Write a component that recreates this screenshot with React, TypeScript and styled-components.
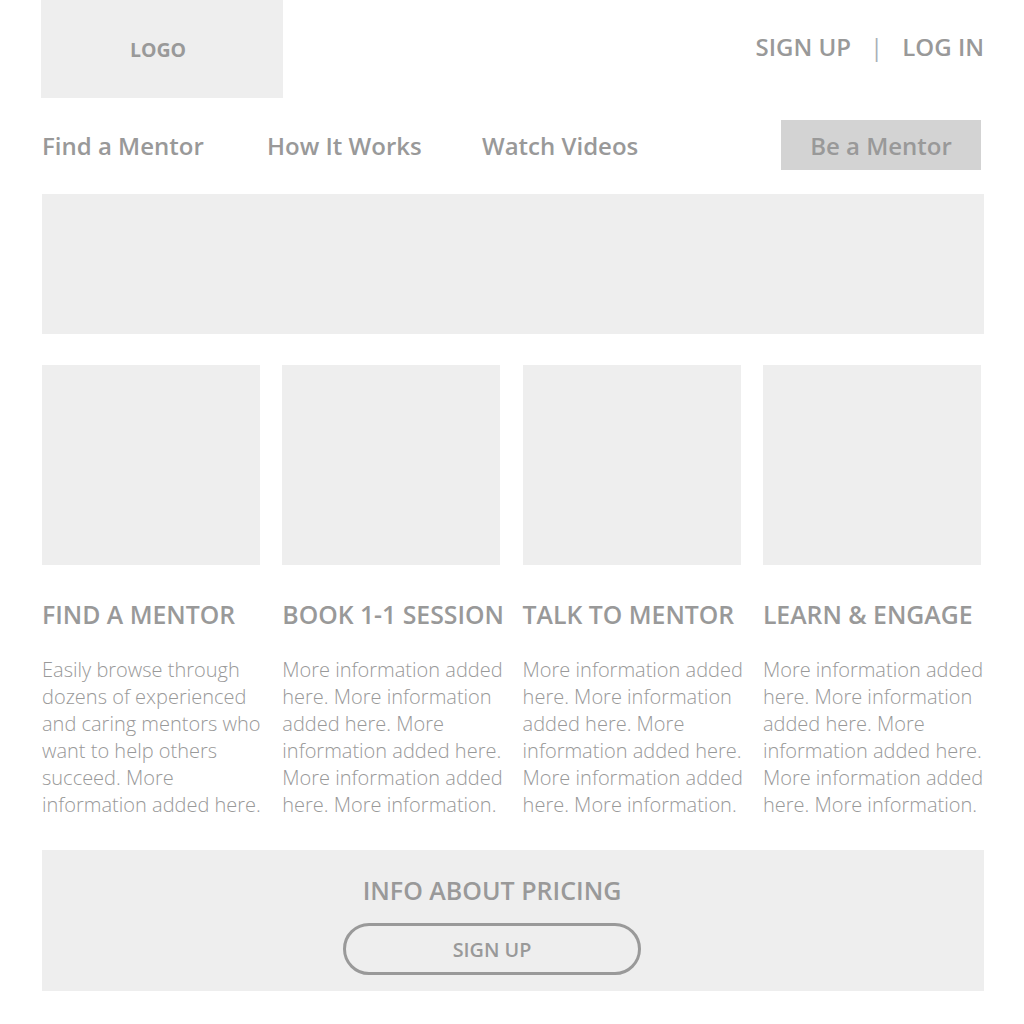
import styled, { createGlobalStyle } from "styled-components";

const GlobalStyle = createGlobalStyle`
    body {
        margin: 0;
        background: #ffffff;
        font-family: "Open Sans", "Liberation Sans", sans-serif;
        color: #999999;
    }
`;

const Page = styled.div`
    width: 942px;
    padding: 0 0 0 42px;
`;

const TopBar = styled.header`
    display: flex;
    justify-content: space-between;
    align-items: flex-start;
    height: 98px;
`;

const LogoBox = styled.div`
    width: 242px;
    height: 98px;
    margin-left: -1px;
    box-sizing: border-box;
    padding-right: 8px;
    background: #eeeeee;
    display: flex;
    align-items: center;
    justify-content: center;
    font-size: 19.5px;
    font-weight: 700;
    color: #999999;
`;

const AuthLinks = styled.div`
    display: flex;
    align-items: center;
    gap: 19px;
    margin-top: 30px;
    font-size: 24px;
    font-weight: 600;
    line-height: 34px;
`;

const Divider = styled.span`
    font-weight: 400;
    color: #aab0b8;
`;

const Nav = styled.nav`
    display: flex;
    align-items: center;
    height: 50px;
    margin-top: 22px;
    margin-bottom: 24px;
`;

const NavLink = styled.span<{ $width: number }>`
    width: ${p => p.$width}px;
    font-size: 24px;
    font-weight: 600;
`;

const MentorButton = styled.span`
    margin-left: auto;
    margin-right: 3px;
    width: 200px;
    height: 50px;
    background: #d3d3d3;
    display: flex;
    align-items: center;
    justify-content: center;
    font-size: 24px;
    font-weight: 600;
`;

const Hero = styled.div`
    height: 140px;
    background: #eeeeee;
`;

const Cards = styled.section`
    display: grid;
    grid-template-columns: repeat(4, 218px);
    column-gap: 22.3px;
    margin-top: 31px;
`;

const Card = styled.div`
    display: flex;
    flex-direction: column;
`;

const CardImage = styled.div`
    height: 200px;
    background: #eeeeee;
`;

const CardTitle = styled.h3`
    margin: 33px 0 0;
    font-size: 24.8px;
    font-weight: 600;
    line-height: 33px;
    white-space: nowrap;
`;

const CardText = styled.p`
    margin: 25px -6px 0 0;
    font-size: 20px;
    font-weight: 300;
    line-height: 27px;
`;

const Pricing = styled.section`
    margin-top: 32px;
    height: 141px;
    background: #eeeeee;
    display: flex;
    flex-direction: column;
    align-items: center;
    box-sizing: border-box;
    padding: 23px 42px 0 0;
`;

const PricingTitle = styled.h2`
    margin: 0;
    font-size: 25px;
    font-weight: 600;
    line-height: 34px;
`;

const SignUpButton = styled.span`
    margin-top: 16px;
    width: 292px;
    height: 46px;
    border: 3px solid #999999;
    border-radius: 26px;
    display: flex;
    align-items: center;
    justify-content: center;
    font-size: 19.8px;
    font-weight: 600;
`;

const more =
    "More information added here. More information added here. More information added here. More information added here. More information.";

const cards = [
    {
        title: "FIND A MENTOR",
        text: "Easily browse through dozens of experienced and caring mentors who want to help others succeed. More information added here.",
    },
    { title: "BOOK 1-1 SESSION", text: more },
    { title: "TALK TO MENTOR", text: more },
    { title: "LEARN & ENGAGE", text: more },
];

function App() {
    return (
        <>
            <GlobalStyle />
            <Page>
                <TopBar>
                    <LogoBox>LOGO</LogoBox>
                    <AuthLinks>
                        <span>SIGN UP</span>
                        <Divider>|</Divider>
                        <span>LOG IN</span>
                    </AuthLinks>
                </TopBar>
                <Nav>
                    <NavLink $width={225}>Find a Mentor</NavLink>
                    <NavLink $width={215}>How It Works</NavLink>
                    <NavLink $width={200}>Watch Videos</NavLink>
                    <MentorButton>Be a Mentor</MentorButton>
                </Nav>
                <Hero />
                <Cards>
                    {cards.map(card => (
                        <Card key={card.title}>
                            <CardImage />
                            <CardTitle>{card.title}</CardTitle>
                            <CardText>{card.text}</CardText>
                        </Card>
                    ))}
                </Cards>
                <Pricing>
                    <PricingTitle>INFO ABOUT PRICING</PricingTitle>
                    <SignUpButton>SIGN UP</SignUpButton>
                </Pricing>
            </Page>
        </>
    );
}

export default App;
